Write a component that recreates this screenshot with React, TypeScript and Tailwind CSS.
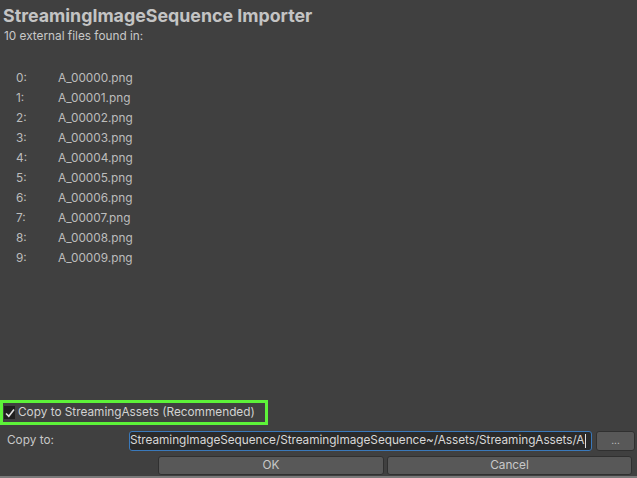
import React from "react";

const files = Array.from({ length: 10 }, (_, i) => ({
  index: i,
  name: `A_0000${i}.png`,
}));

const App = () => {
  return (
    <div
      className="w-[637px] h-[478px] bg-[#404040] text-[#c8c8c8] flex flex-col overflow-hidden"
      style={{ fontFamily: "Inter, 'Noto Sans', sans-serif" }}
    >
      <div className="px-[3px] pt-[4px] text-[17.8px] leading-[24px] font-bold text-[#c4c4c4]">
        StreamingImageSequence Importer
      </div>
      <div className="px-[4px] text-[11.8px] leading-[16px] text-[#c8c8c8]">
        10 external files found in:
      </div>

      <div className="mt-[25px] flex flex-col">
        {files.map((f) => (
          <div key={f.index} className="flex h-[20px] items-center text-[11.8px] text-[#bdbdbd]">
            <span className="w-[58px] pl-[16px]">{f.index}:</span>
            <span>{f.name}</span>
          </div>
        ))}
      </div>

      <div className="flex-1" />

      <div className="flex">
        <div className="h-[25px] w-[268px] border-[3px] border-[#5df239] flex items-center gap-[3px] pl-[1px]">
          <div className="w-[11px] h-[13px] bg-[#1f1f1f] flex items-center justify-center">
            <svg width="10" height="10" viewBox="0 0 10 10">
              <path d="M1 5.5 L3.8 8.2 L9 1.5" stroke="#e0e0e0" strokeWidth="1.6" fill="none" />
            </svg>
          </div>
          <span className="text-[11.8px] text-[#d2d2d2] whitespace-nowrap">
            Copy to StreamingAssets (Recommended)
          </span>
        </div>
      </div>

      <div className="flex items-center mt-[5px] h-[21px]">
        <span className="w-[129px] pl-[7px] text-[11.8px] text-[#c8c8c8]">Copy to:</span>
        <div className="w-[463px] h-[20px] bg-[#2a2a2a] border border-[#3a79bb] rounded-[3px] flex items-center overflow-hidden whitespace-nowrap">
          <span className="text-[11.8px] tracking-[-0.05px] text-[#d8d8d8]">
            StreamingImageSequence/StreamingImageSequence~/Assets/StreamingAssets/A
          </span>
          <span className="w-[1px] h-[14px] bg-[#e0e0e0] ml-[1px]" />
        </div>
        <div className="ml-[4px] w-[39px] h-[20px] bg-[#585858] border border-[#303030] rounded-[3px] flex items-center justify-center text-[10px] text-[#c8c8c8]">
          ...
        </div>
      </div>

      <div className="flex mt-[5px] pl-[158px] pr-[5px] gap-[3px] h-[19px]">
        <div className="w-[226px] bg-[#585858] border border-[#303030] rounded-[3px] flex items-center justify-center text-[11.8px] text-[#c8c8c8]">
          OK
        </div>
        <div className="flex-1 bg-[#585858] border border-[#303030] rounded-[3px] flex items-center justify-center text-[11.8px] text-[#c8c8c8]">
          Cancel
        </div>
      </div>
      <div className="mt-[1px] h-[2px] bg-[#7a7a7a]" />
    </div>
  );
};

export default App;
